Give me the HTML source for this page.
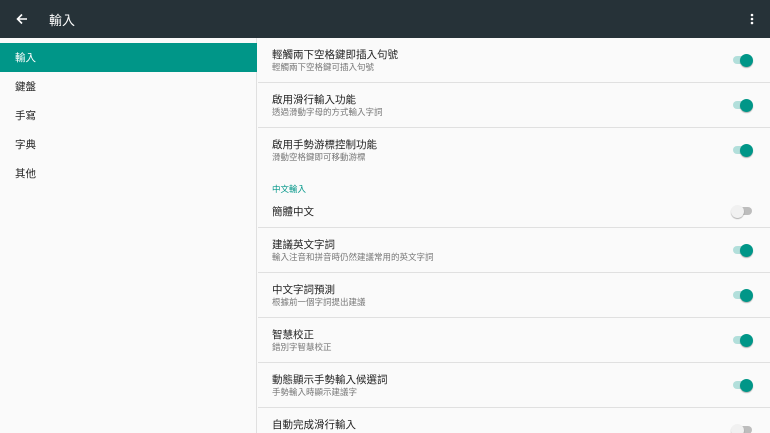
<!DOCTYPE html><html><head><meta charset="utf-8"><style>
*{margin:0;padding:0;box-sizing:border-box}
html{width:770px;height:433px;overflow:hidden}
body{width:770px;height:433px;overflow:hidden;background:#fafafa;font-family:"Liberation Sans","Noto Sans CJK TC",sans-serif;position:relative}
.hdr{position:absolute;left:0;top:0;width:770px;height:38px;background:#263238;color:#fff}
.hdr .t{position:absolute;left:49px;top:10px;font-size:13px}
.left{position:absolute;left:0;top:38px;width:257px;height:395px;border-right:1px solid #e0e0e0;background:#fafafa}
.li{position:absolute;left:0;width:257px;height:29px;font-size:10.5px;color:#222;padding:7px 0 0 15px}
.li.sel{background:#009688;color:#fff}
.it{position:absolute;left:258px;width:512px;border-bottom:1px solid #e0e0e0}
.tt{position:absolute;left:14px;font-size:10.5px;color:#222}
.st{position:absolute;left:14px;font-size:8.5px;color:#777}
.sw{position:absolute;left:475px;width:19px;height:8px;border-radius:4px;background:#b2dfdb}
.sw:after{content:"";position:absolute;left:7px;top:-2.5px;width:13px;height:13px;border-radius:50%;background:#009688;box-shadow:0 1px 1px rgba(0,0,0,.3)}
.sw.off{background:#bdbdbd}
.sw.off:after{left:-2px;background:#f1f1f1}
.cat{position:absolute;left:272px;top:183px;font-size:8.5px;color:#009688}
</style></head><body>
<div class="hdr">
<svg style="position:absolute;left:15px;top:12px" width="14" height="14" viewBox="0 0 14 14"><path d="M12 7H2.5M7 2.5L2.5 7L7 11.5" stroke="#fff" stroke-width="1.6" fill="none"/></svg>
<div class="t">輸入</div>
<svg style="position:absolute;left:749px;top:13px" width="6" height="12"><circle cx="3" cy="2" r="1.3" fill="#fff"/><circle cx="3" cy="6" r="1.3" fill="#fff"/><circle cx="3" cy="10" r="1.3" fill="#fff"/></svg>
</div>
<div class="left">
<div class="li sel" style="top:5px">輸入</div>
<div class="li" style="top:34px">鍵盤</div>
<div class="li" style="top:63px">手寫</div>
<div class="li" style="top:92px">字典</div>
<div class="li" style="top:121px">其他</div>
</div>
<div class="it" style="top:38px;height:45px"><div class="tt" style="top:9px">輕觸兩下空格鍵即插入句號</div><div class="st" style="top:23px">輕觸兩下空格鍵可插入句號</div><div class="sw" style="top:18px"></div></div>
<div class="it" style="top:83px;height:45px"><div class="tt" style="top:9px">啟用滑行輸入功能</div><div class="st" style="top:23px">透過滑動字母的方式輸入字詞</div><div class="sw" style="top:18px"></div></div>
<div class="it" style="top:128px;height:45px;border:none"><div class="tt" style="top:9px">啟用手勢游標控制功能</div><div class="st" style="top:23px">滑動空格鍵即可移動游標</div><div class="sw" style="top:18px"></div></div>
<div class="cat">中文輸入</div>
<div class="it" style="top:196px;height:32px"><div class="tt" style="top:8px">簡體中文</div><div class="sw off" style="top:11px"></div></div>
<div class="it" style="top:228px;height:45px"><div class="tt" style="top:9px">建議英文字詞</div><div class="st" style="top:23px">輸入注音和拼音時仍然建議常用的英文字詞</div><div class="sw" style="top:18px"></div></div>
<div class="it" style="top:273px;height:45px"><div class="tt" style="top:9px">中文字詞預測</div><div class="st" style="top:23px">根據前一個字詞提出建議</div><div class="sw" style="top:18px"></div></div>
<div class="it" style="top:318px;height:45px"><div class="tt" style="top:9px">智慧校正</div><div class="st" style="top:23px">錯別字智慧校正</div><div class="sw" style="top:18px"></div></div>
<div class="it" style="top:363px;height:45px"><div class="tt" style="top:9px">動態顯示手勢輸入候選詞</div><div class="st" style="top:23px">手勢輸入時顯示建議字</div><div class="sw" style="top:18px"></div></div>
<div class="it" style="top:408px;height:25px;border:none;overflow:hidden"><div class="tt" style="top:9px">自動完成滑行輸入</div><div class="sw off" style="top:18px"></div></div>
</body></html>
